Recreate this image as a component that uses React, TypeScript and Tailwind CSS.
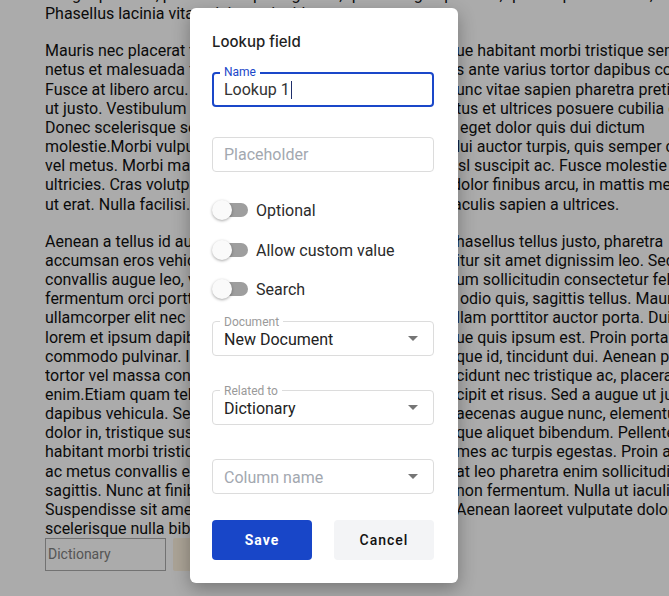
import React from "react";

type L = [string, string, number?];

const p2: L[] = [
  ["Mauris nec placerat tortor, sed vehicula velit. Pellentesque", "ue habitant morbi tristique senectus"],
  ["netus et malesuada fames ac turpis egestas. Aliquam", "s ante varius tortor dapibus congue."],
  ["Fusce at libero arcu. Integer vitae purus eu nunc lacinia", "unc vitae sapien pharetra pretium"],
  ["ut justo. Vestibulum ante ipsum primis in faucibus orci luctus", "tus et ultrices posuere cubilia curae;"],
  ["Donec scelerisque sem nec lorem volutpat, vitae feugiat", "\u00a0eget dolor quis dui dictum"],
  ["molestie.Morbi vulputate nibh et justo faucibus, quis aliquet", "dui auctor turpis, quis semper congue", -5],
  ["vel metus. Morbi malesuada libero vitae ante efficitur, at lacinia n", "isl suscipit ac. Fusce molestie pretium", -2],
  ["ultricies. Cras volutpat ullamcorper lectus, vel tempus d", "dolor finibus arcu, in mattis metus", -4],
  ["ut erat. Nulla facilisi. Vivamus eleifend posuere elit, non ia", "aculis sapien a ultrices.", -3],
];

const p3: L[] = [
  ["Aenean a tellus id augue vulputate tempor sed nec massa. P", "hasellus tellus justo, pharetra"],
  ["accumsan eros vehicula id. Vivamus cursus tempor, efficitur", "itur sit amet dignissim leo. Sed"],
  ["convallis augue leo, vitae blandit nibh faucibus at. Interdum", "um sollicitudin consectetur felis."],
  ["fermentum orci porttitor at. Pellentesque vulputate", "\u00a0odio quis, sagittis tellus. Mauris"],
  ["ullamcorper elit nec sem varius, vel tincidunt ipsum. Nu", "llam porttitor auctor porta. Duis"],
  ["lorem et ipsum dapibus interdum. Curabitur scelerisq", "ue quis ipsum est. Proin porta"],
  ["commodo pulvinar. In viverra magna, ac ornare pellentes", "que id, tincidunt dui. Aenean pellentesque"],
  ["tortor vel massa consequat, quis vulputate leo tin", "cidunt nec tristique ac, placerat"],
  ["enim.Etiam quam tellus, gravida eget ligula sus", "cipit et risus. Sed a augue ut justo"],
  ["dapibus vehicula. Sed nec velit vel lorem viverra. M", "aecenas augue nunc, elementum"],
  ["dolor in, tristique suscipit nisi. Donec at neque", "que aliquet bibendum. Pellentesque"],
  ["habitant morbi tristique senectus et netus et fa", "mes ac turpis egestas. Proin at"],
  ["ac metus convallis eget. Vestibulum hendrerit, lacus", "at leo pharetra enim sollicitudin"],
  ["sagittis. Nunc at finibus nisl. Curabitur elementum", "non fermentum. Nulla ut iaculis"],
  ["Suspendisse sit amet libero vitae ex convallis lacinia.", "Aenean laoreet vulputate dolor."],
];

function Line({ l, r, o }: { l: string; r: string; o?: number }) {
  return (
    <div className="flex whitespace-nowrap">
      <span className="block w-[411px] shrink-0 overflow-hidden">{l}</span>
      <span className="block" style={o ? { marginLeft: o } : undefined}>
        {r}
      </span>
    </div>
  );
}

function Toggle({ label }: { label: string }) {
  return (
    <div className="flex h-[20px] items-center">
      <div className="relative flex h-[20px] w-[36px] items-center">
        <div className="ml-[2px] h-[14px] w-[34px] rounded-full bg-[#9e9e9e]" />
        <div className="absolute left-0 top-0 h-[20px] w-[20px] rounded-full bg-[#fafafa] shadow-[0_1px_3px_rgba(0,0,0,0.35)]" />
      </div>
      <span className="ml-[8px] mt-[2px] text-[16px] leading-[20px] text-[#2b2b2b]">{label}</span>
    </div>
  );
}

function Arrow() {
  return (
    <svg width="10" height="5" viewBox="0 0 10 5">
      <path d="M0 0h10L5 5z" fill="#757575" />
    </svg>
  );
}

function SelectField({ label, value, placeholder }: { label?: string; value?: string; placeholder?: string }) {
  return (
    <div className="relative flex h-[35px] w-full items-center justify-between rounded-[4px] border border-[#dcdcdc] pl-[11px] pr-[15px]">
      {label && (
        <span className="absolute left-[7px] top-[-7px] bg-white px-[4px] text-[12px] leading-[14px] text-[#9a9a9a]">
          {label}
        </span>
      )}
      {value ? (
        <span className="mt-[2px] text-[16px] leading-[20px] text-[#222]">{value}</span>
      ) : (
        <span className="mt-[2px] text-[16px] leading-[20px] text-[#a3a8b0]">{placeholder}</span>
      )}
      <Arrow />
    </div>
  );
}

export default function App() {
  return (
    <div className="relative h-[596px] w-[669px] overflow-hidden bg-white font-['Roboto',sans-serif]">
      <div className="mt-[-15px] pl-[45px] text-[16px] leading-[19.15px] text-[#111]">
        <div className="whitespace-nowrap">
          Integer porttitor, purus ut tempus egestas, quam magna pulvinar, quis aliquam massa, arcu quis purus.
        </div>
        <div className="whitespace-nowrap">Phasellus lacinia vitae nisi non tincidunt.</div>
        <div className="mt-[18px]">
          {p2.map(([l, r, o], i) => (
            <Line key={i} l={l} r={r} o={o} />
          ))}
        </div>
        <div className="mt-[18px]">
          {p3.map(([l, r, o], i) => (
            <Line key={i} l={l} r={r} o={o} />
          ))}
          <div className="whitespace-nowrap">scelerisque nulla bibendum, quis commodo orci.</div>
        </div>
        <div className="flex gap-[7px]">
          <div className="flex h-[33px] w-[121px] items-center border border-[#aaaaaa] bg-white pl-[2px] text-[14px] text-[#808080]">
            Dictionary
          </div>
          <div className="h-[33px] w-[80px] rounded-[2px] bg-[#fff3e0]" />
        </div>
      </div>

      <div className="absolute inset-0 bg-[rgba(0,0,0,0.33)]" />

      <div className="absolute left-[190px] top-[8px] w-[268px] rounded-[6px] bg-white pb-[23px] pl-[22px] pr-[24px] pt-[24px] shadow-[0_6px_18px_rgba(0,0,0,0.3)]">
        <div className="font-['Inter',sans-serif] text-[15px] font-medium leading-[20px] text-[#1f1f1f]">Lookup field</div>

        <div className="relative mt-[20px] flex h-[35px] w-full items-center rounded-[4px] border-2 border-[#1a47c9] pl-[10px]">
          <span className="absolute left-[6px] top-[-9px] bg-white px-[4px] text-[12px] leading-[14px] text-[#1a47c9]">Name</span>
          <span className="text-[16px] leading-[20px] text-[#333]">Lookup 1</span>
          <span className="ml-[1px] h-[18px] w-[1px] bg-[#1f2f6b]" />
        </div>

        <div className="mt-[30px] flex h-[35px] w-full items-center rounded-[4px] border border-[#dcdcdc] pl-[11px]">
          <span className="mt-[1px] text-[16px] leading-[20px] text-[#a3a8b0]">Placeholder</span>
        </div>

        <div className="mt-[28px] flex flex-col gap-[19.5px]">
          <Toggle label="Optional" />
          <Toggle label="Allow custom value" />
          <Toggle label="Search" />
        </div>

        <div className="mt-[22px] flex flex-col gap-[34px]">
          <SelectField label="Document" value="New Document" />
          <SelectField label="Related to" value="Dictionary" />
          <SelectField placeholder="Column name" />
        </div>

        <div className="mt-[26px] flex gap-[22px]">
          <button className="flex h-[40px] w-[100px] items-center justify-center rounded-[4px] bg-[#1846c8] text-[14px] font-bold tracking-[1px] text-white">
            Save
          </button>
          <button className="flex h-[40px] w-[100px] items-center justify-center rounded-[4px] bg-[#f3f4f6] text-[14px] font-medium tracking-[1px] text-[#111]">
            Cancel
          </button>
        </div>
      </div>
    </div>
  );
}
